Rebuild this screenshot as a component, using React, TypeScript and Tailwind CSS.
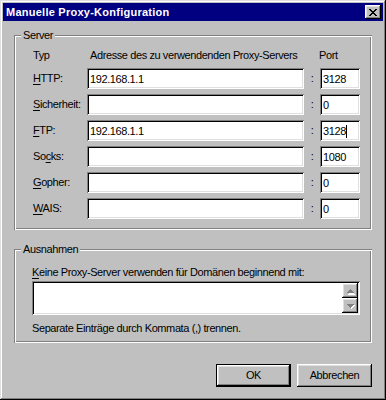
import React from "react";

const sunken =
  "bg-white shadow-[inset_1px_1px_#808080,inset_-1px_-1px_#ffffff,inset_2px_2px_#000000,inset_-2px_-2px_#dfdfdf]";
const raised =
  "bg-[#c0c0c0] shadow-[inset_-1px_-1px_#000000,inset_1px_1px_#ffffff,inset_-2px_-2px_#808080,inset_2px_2px_#dfdfdf]";
const etched =
  "shadow-[inset_1px_1px_#808080,inset_-1px_-1px_#ffffff,inset_2px_2px_#ffffff,inset_-2px_-2px_#808080]";

function Label({ pre, u, post }: { pre?: string; u: string; post: string }) {
  return (
    <span>
      {pre}
      <span className="underline underline-offset-[2px]">{u}</span>
      {post}
    </span>
  );
}

function Row({
  label,
  addr,
  port,
  caret,
}: {
  label: React.ReactNode;
  addr: string;
  port: string;
  caret?: boolean;
}) {
  return (
    <div className="flex items-center h-[21px]">
      <div className="w-[54px]">{label}</div>
      <div className={`${sunken} w-[217px] h-[21px] flex items-center pl-[3px] pt-[1px]`}>{addr}</div>
      <div className="w-[16px] text-center">:</div>
      <div className={`${sunken} w-[40px] h-[21px] flex items-center pl-[3px] pt-[1px]`}>
        {port}
        {caret && <span className="inline-block w-[1px] h-[13px] bg-black" />}
      </div>
    </div>
  );
}

function Arrow({ up }: { up?: boolean }) {
  return (
    <svg width="7" height="4" viewBox="0 0 7 4" className="overflow-visible">
      {up ? (
        <>
          <path d="M1 5h7v1h-7zM2 4h5v1h-5zM3 3h3v1h-3zM4 2h1v1h-1z" fill="#ffffff" />
          <path d="M0 3h7v1h-7zM1 2h5v1h-5zM2 1h3v1h-3zM3 0h1v1h-1z" fill="#808080" />
        </>
      ) : (
        <>
          <path d="M1 1h7v1h-7zM2 2h5v1h-5zM3 3h3v1h-3zM4 4h1v1h-1z" fill="#ffffff" />
          <path d="M0 0h7v1h-7zM1 1h5v1h-5zM2 2h3v1h-3zM3 3h1v1h-1z" fill="#808080" />
        </>
      )}
    </svg>
  );
}

export default function App() {
  return (
    <div
      className="w-[386px] h-[400px] bg-[#c0c0c0] p-[3px] flex flex-col text-[11px] leading-[13px] tracking-[-0.4px] text-black shadow-[inset_-1px_-1px_#000000,inset_1px_1px_#dfdfdf,inset_-2px_-2px_#808080,inset_2px_2px_#ffffff]"
      style={{ fontFamily: '"Liberation Sans", Arial, sans-serif' }}
    >
      {/* Title bar */}
      <div className="h-[18px] bg-[#000080] flex items-center justify-between pl-[3px] pr-[2px]">
        <span className="text-white font-bold text-[11px] tracking-[0.25px]">Manuelle Proxy-Konfiguration</span>
        <div className={`${raised} w-[16px] h-[14px] flex items-center justify-center`}>
          <svg width="8" height="7" viewBox="0 0 8 7">
            <path
              d="M0 0h2v1h-2zM6 0h2v1h-2zM1 1h2v1h-2zM5 1h2v1h-2zM2 2h4v1h-4zM3 3h2v1h-2zM2 4h4v1h-4zM1 5h2v1h-2zM5 5h2v1h-2zM0 6h2v1h-2zM6 6h2v1h-2z"
              fill="#000"
            />
          </svg>
        </div>
      </div>

      {/* Body */}
      <div className="flex flex-col px-[11px] pt-[14px]">
        {/* Server group */}
        <div className={`relative ${etched} h-[195px] pl-[19px] pt-[14px]`}>
          <span className="absolute left-[7px] top-[-6px] bg-[#c0c0c0] px-[2px]">Server</span>
          <div className="flex h-[13px]">
            <div className="w-[57px]">Typ</div>
            <div className="w-[229px]">Adresse des zu verwendenden Proxy-Servers</div>
            <div>Port</div>
          </div>
          <div className="flex flex-col gap-[5px] mt-[6px]">
            <Row label={<Label u="H" post="TTP:" />} addr="192.168.1.1" port="3128" />
            <Row label={<Label u="S" post="icherheit:" />} addr="" port="0" />
            <Row label={<Label u="F" post="TP:" />} addr="192.168.1.1" port="3128" caret />
            <Row label={<Label pre="So" u="c" post="ks:" />} addr="" port="1080" />
            <Row label={<Label u="G" post="opher:" />} addr="" port="0" />
            <Row label={<Label u="W" post="AIS:" />} addr="" port="0" />
          </div>
        </div>

        {/* Ausnahmen group */}
        <div className={`relative ${etched} mt-[19px] h-[94px] pl-[18px] pt-[17px]`}>
          <span className="absolute left-[7px] top-[-6px] bg-[#c0c0c0] px-[2px]">Ausnahmen</span>
          <div>
            <Label u="K" post="eine Proxy-Server verwenden für Domänen beginnend mit:" />
          </div>
          <div className={`${sunken} mt-[2px] w-[328px] h-[34px] flex justify-end p-[2px]`}>
            <div className="flex flex-col w-[16px]">
              <div className={`${raised} h-[15px] flex items-center justify-center`}>
                <Arrow up />
              </div>
              <div className={`${raised} h-[15px] flex items-center justify-center`}>
                <Arrow />
              </div>
            </div>
          </div>
          <div className="mt-[7px]">Separate Einträge durch Kommata (,) trennen.</div>
        </div>

        {/* Buttons */}
        <div className="flex justify-end gap-[6px] mt-[21px]">
          <div className="w-[75px] h-[23px] border border-black">
            <div className={`${raised} w-full h-full flex items-center justify-center`}>OK</div>
          </div>
          <div className={`${raised} w-[75px] h-[23px] flex items-center justify-center`}>Abbrechen</div>
        </div>
      </div>
    </div>
  );
}
